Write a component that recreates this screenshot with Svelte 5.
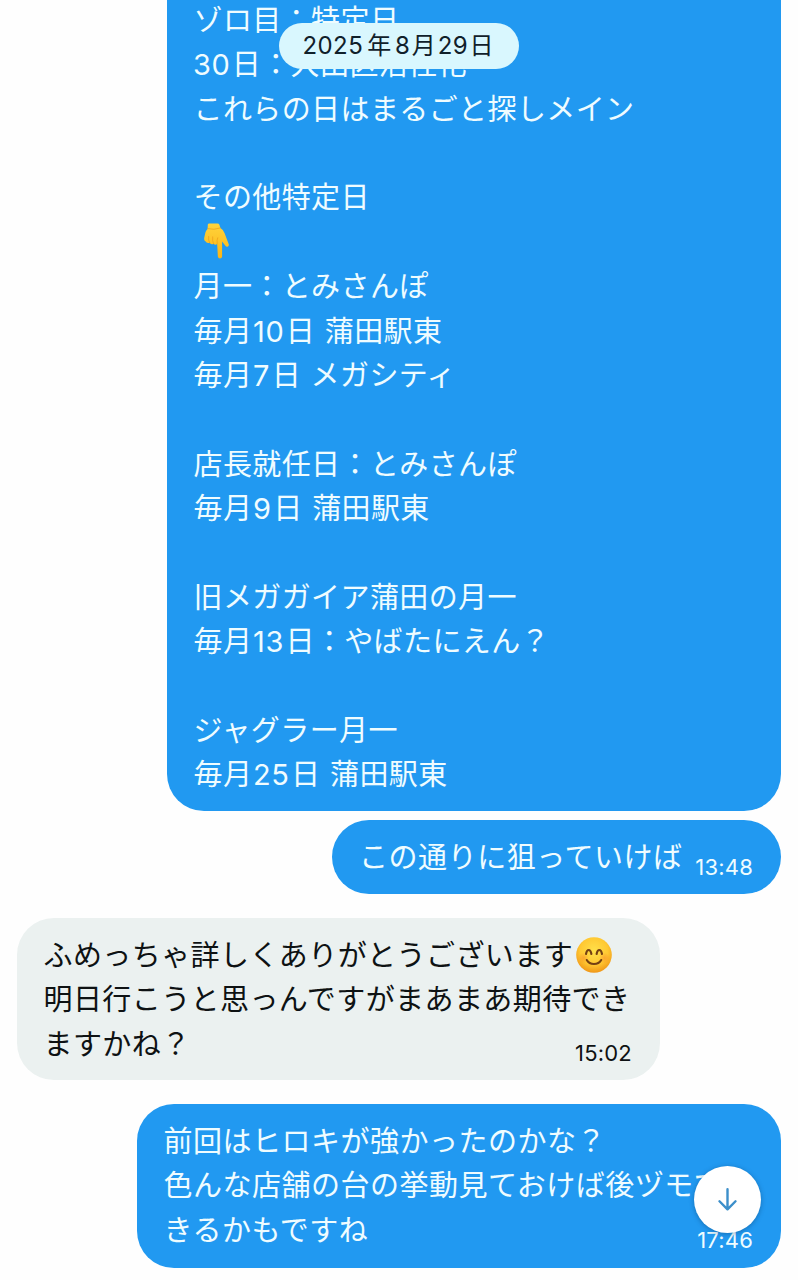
<script>
  const planLines = [
    'ゾロ目：特定日',
    '30日：大田区活性化',
    'これらの日はまるごと探しメイン',
    '',
    'その他特定日',
    'point-down',
    '月一：とみさんぽ',
    '毎月10日 蒲田駅東',
    '毎月7日 メガシティ',
    '',
    '店長就任日：とみさんぽ',
    '毎月9日 蒲田駅東',
    '',
    '旧メガガイア蒲田の月一',
    '毎月13日：やばたにえん？',
    '',
    'ジャグラー月一',
    '毎月25日 蒲田駅東'
  ];
  const replyLines = ['前回はヒロキが強かったのかな？', '色んな店舗の台の挙動見ておけば後ヅモで', 'きるかもですね'];
</script>

<main class="chat">
  <div class="date-pill">2025<i class="year">年</i>8<i>月</i>29<i>日</i></div>

  <section class="bubble sent plan">
    {#each planLines as line}
      <p>
        {#if line === 'point-down'}
          <svg class="hand" viewBox="0 0 28 38" aria-hidden="true">
            <defs>
              <linearGradient id="skin" x1="0" y1="0" x2="0" y2="1">
                <stop offset="0" stop-color="#ffd43c" />
                <stop offset="1" stop-color="#fbb516" />
              </linearGradient>
            </defs>
            <path d="M5 1.8Q5.2.8 6.5.8H15Q16.5.8 17 2.1L18 5.5Q21 7 22.4 11L26.7 22.4Q27.2 24.6 25.4 25Q24 25.2 23 23.7L19.8 19.4V35Q19.6 37.2 17.6 37.2Q15.7 37.2 15.4 35L14.7 22Q12.8 23.7 10.9 21.8Q8.4 23.2 6.8 20.9Q3.8 21.8 2.5 19.3Q.8 18.3 1.3 15.7L2.5 10.3Q2.9 8.1 4.8 6.5Z" fill="url(#skin)" />
            <path d="M5.8 14.3Q5.4 18.3 6.8 20.9M10 14.7Q9.5 19 10.9 21.8M14.7 22Q14.2 18 15.2 15.7M5 6.2Q11 8 18 5.5" fill="none" stroke="#eda01c" stroke-width=".8" stroke-linecap="round" />
          </svg>
        {:else}{#each line.split(/(\d+)/) as part}{#if /^\d/.test(part)}<span class="num">{part}</span>{:else}{part}{/if}{/each}{/if}
      </p>
    {/each}
  </section>

  <section class="bubble sent short">
    <p>この通りに狙っていけば</p>
    <time>13:48</time>
  </section>

  <section class="bubble received">
    <p>ふめっちゃ詳しくありがとうございます<svg class="smile" viewBox="0 0 36 36" aria-hidden="true">
        <defs>
          <radialGradient id="face" cx=".5" cy=".38" r=".65">
            <stop offset="0" stop-color="#ffe04a" />
            <stop offset=".6" stop-color="#ffc832" />
            <stop offset="1" stop-color="#ee9014" />
          </radialGradient>
          <radialGradient id="cheek">
            <stop offset="0" stop-color="#f77b29" stop-opacity=".45" />
            <stop offset="1" stop-color="#f77b29" stop-opacity="0" />
          </radialGradient>
        </defs>
        <circle cx="18" cy="18" r="17.8" fill="url(#face)" />
        <circle cx="7.5" cy="21" r="5.5" fill="url(#cheek)" />
        <circle cx="28.5" cy="21" r="5.5" fill="url(#cheek)" />
        <path d="M10 17Q10.7 13 12.7 13Q14.7 13 15.4 17M20.6 17Q21.3 13 23.3 13Q25.3 13 26 17M10.8 23Q13 27 18 27Q23 27 25.2 23" fill="none" stroke="#744013" stroke-width="2.1" stroke-linecap="round" />
      </svg></p>
    <p>明日行こうと思っんですがまあまあ期待でき</p>
    <p>ますかね？</p>
    <time>15:02</time>
  </section>

  <section class="bubble sent reply">
    {#each replyLines as line}<p>{line}</p>{/each}
    <time>17:46</time>
  </section>

  <button class="jump" aria-label="最新のメッセージへ">
    <svg viewBox="0 0 24 24" aria-hidden="true">
      <path d="M12 2.2V21.2M4.3 13.7L12 21.4L19.7 13.7" />
    </svg>
  </button>
</main>

<style>
  :global(body) { margin: 0; background: #fefefe; }
  .chat {
    position: relative;
    box-sizing: border-box;
    width: 798px;
    height: 1280px;
    overflow: hidden;
    padding: 0 17px;
    display: flex;
    flex-direction: column;
    align-items: flex-end;
    background: #fefefe;
    font-family: Inter, "Noto Sans CJK JP", sans-serif;
    font-size: 29px;
    line-height: 44.4px;
    letter-spacing: 0.42px;
    word-spacing: 1px;
  }
  .bubble {
    position: relative;
    box-sizing: border-box;
    flex: none;
    border-radius: 37px;
    padding: 16px 27px 0 26.5px;
  }
  .sent { background: #2199f1; color: #effcff; }
  p { margin: 0; height: 44.4px; white-space: nowrap; }
  .num { letter-spacing: 0.5px; margin: 0 1.6px 0 0.8px; }
  .plan p:nth-child(2) .num { margin-left: -0.5px; }
  .plan {
    width: 614px;
    height: 811px;
    padding-top: 0;
    border-radius: 0 0 37px 37px;
    letter-spacing: 0.4px;
  }
  .plan p:first-child { margin-top: -1.2px; }
  .short {
    width: 449px;
    height: 74px;
    margin-top: 9px;
    padding-left: 27px;
    letter-spacing: 0.55px;
  }
  .received {
    align-self: flex-start;
    width: 643px;
    height: 162px;
    margin-top: 24px;
    background: #ebf1f0;
    color: #0e1213;
  }
  .reply { width: 644px; height: 164px; margin-top: 24px; letter-spacing: 0.5px; }
  time {
    position: absolute;
    right: 28px;
    bottom: 12px;
    font-size: 22px;
    line-height: 30px;
    letter-spacing: 0.2px;
  }
  .reply time { bottom: 13px; }
  .hand { display: block; width: 27px; height: 38px; margin-left: 9px; position: relative; top: 1px; }
  .smile { display: inline-block; width: 36px; height: 36px; margin-left: 3px; vertical-align: -7px; }
  .date-pill {
    position: absolute;
    z-index: 2;
    top: 23px;
    left: 279px;
    box-sizing: border-box;
    width: 240px;
    height: 46px;
    border-radius: 23px;
    background: #d9f7fe;
    color: #10202a;
    font-size: 24px;
    line-height: 46px;
    text-align: center;
    letter-spacing: 0.4px;
    white-space: nowrap;
  }
  .date-pill i { font-style: normal; margin: 0 1.5px; }
  .date-pill .year { margin: 0 3.5px 0 4px; }
  .jump {
    position: absolute;
    left: 694px;
    top: 1166px;
    display: grid;
    place-items: center;
    width: 67px;
    height: 67px;
    padding: 0;
    border: 0;
    border-radius: 50%;
    background: #fff;
    box-shadow: 0 1px 5px rgba(0, 35, 70, 0.35);
  }
  .jump svg { width: 25px; height: 25px; }
  .jump path { fill: none; stroke: #3c8fca; stroke-width: 2.3; stroke-linecap: round; stroke-linejoin: round; }
</style>
